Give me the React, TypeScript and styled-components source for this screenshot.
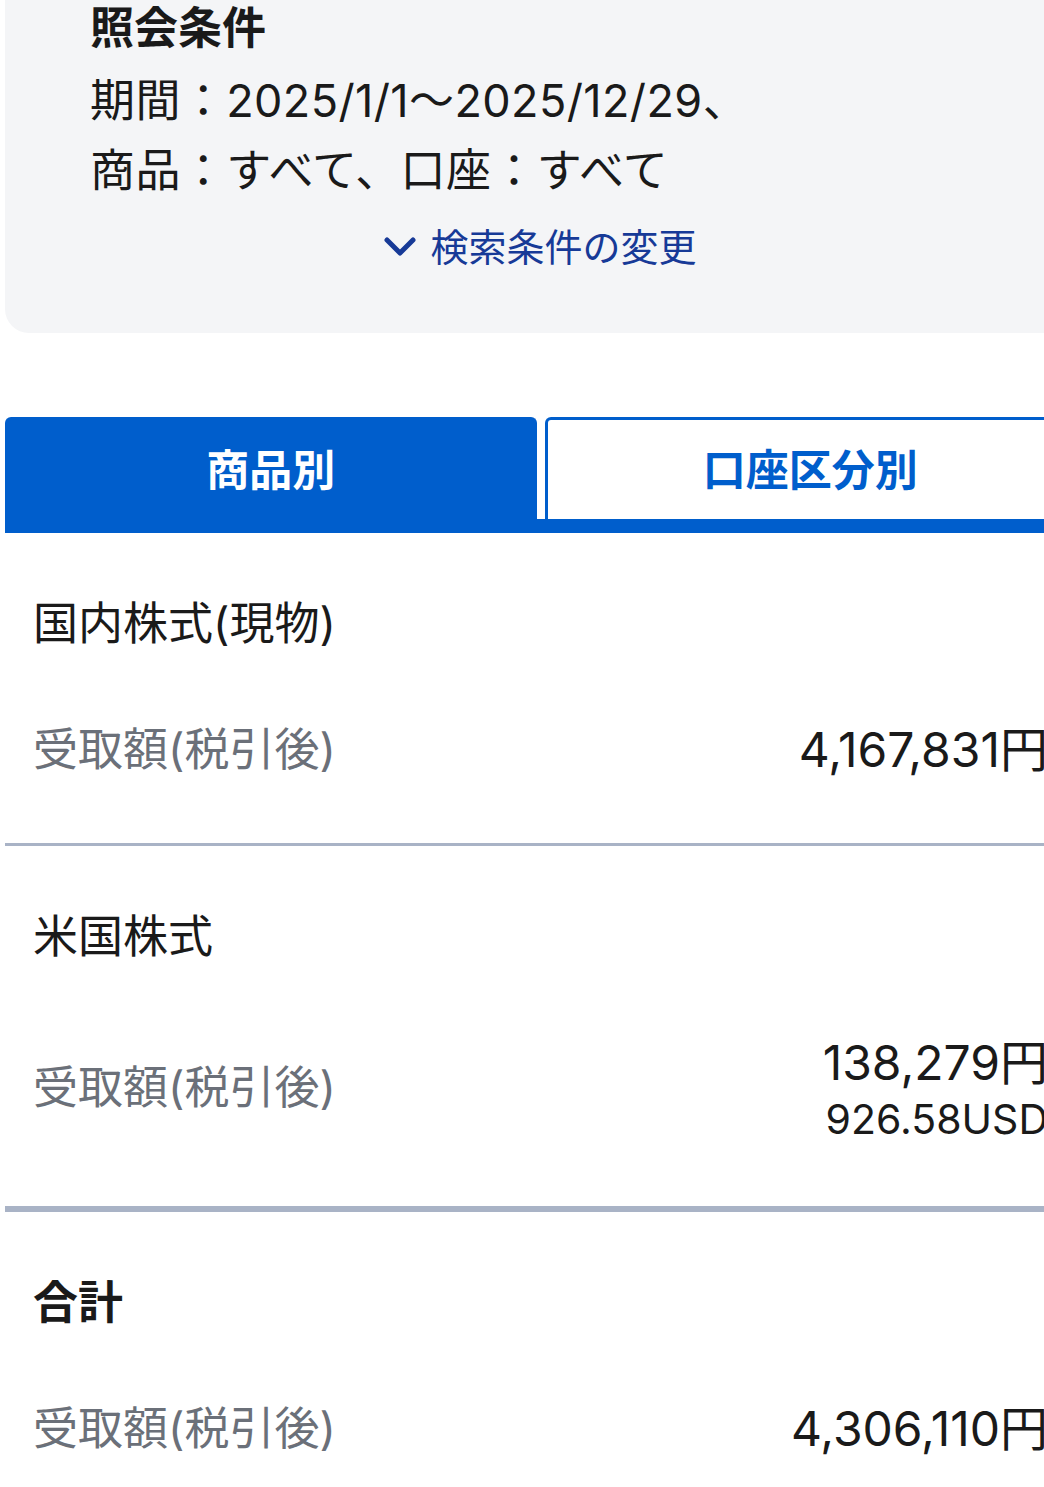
import React from 'react';
import styled, { createGlobalStyle } from 'styled-components';

const GlobalStyle = createGlobalStyle`
  html, body {
    margin: 0;
    padding: 0;
    background: #ffffff;
    overflow-x: hidden;
  }
  body {
    font-family: Inter, "Noto Sans CJK JP", "Noto Sans", sans-serif;
    color: #1a1a1a;
  }
`;

const Page = styled.div`
  width: 1071px;
  margin-left: 5px;
`;

// Search conditions panel
const Conditions = styled.section`
  background: #f4f5f7;
  border-radius: 0 0 24px 24px;
  padding: 0 28px 58px 85px;
`;

const ConditionsTitle = styled.h2`
  margin: 0 0 10px;
  font-size: 44px;
  font-weight: 700;
  line-height: 56px;
`;

const ConditionLine = styled.div`
  font-size: 45px;
  line-height: 70px;
  letter-spacing: 0.4px;
  color: #1a1a1a;
`;

const ChangeLink = styled.a`
  display: flex;
  align-items: center;
  justify-content: center;
  gap: 14px;
  margin: 13px 0 0 -57px;
  font-size: 38px;
  line-height: 56px;
  color: #173a97;
  text-decoration: none;
  cursor: pointer;
`;

// Tabs
const Tabs = styled.div`
  display: grid;
  grid-template-columns: 1fr 1fr;
  gap: 8px;
  margin-top: 84px;
  border-bottom: 14px solid #005ecc;
`;

const Tab = styled.button<{ active?: boolean }>`
  height: 102px;
  padding: 0 0 6px;
  border-radius: 6px 6px 0 0;
  border: 3px solid #005ecc;
  border-bottom: none;
  background: ${({ active }) => (active ? '#005ecc' : '#ffffff')};
  color: ${({ active }) => (active ? '#ffffff' : '#005ecc')};
  font-family: inherit;
  font-size: 43px;
  font-weight: 700;
  cursor: pointer;
`;

// Result sections
const Section = styled.section<{ thick?: boolean; last?: boolean }>`
  padding: 60px 28px 62px;
  border-bottom: ${({ thick, last }) =>
    last ? 'none' : `${thick ? 6 : 3}px solid #a9b3c6`};
  display: flex;
  flex-direction: column;
  gap: 64px;
`;

const SectionTitle = styled.h3<{ bold?: boolean }>`
  margin: 0;
  font-size: 45px;
  line-height: 62px;
  font-weight: ${({ bold }) => (bold ? 700 : 400)};
  color: #1a1a1a;
`;

const AmountRow = styled.div`
  display: flex;
  align-items: center;
  justify-content: space-between;
`;

const AmountLabel = styled.span`
  font-size: 45px;
  line-height: 62px;
  color: #6b7079;
`;

const AmountValues = styled.div`
  display: flex;
  flex-direction: column;
  align-items: flex-end;
`;

const Amount = styled.span`
  font-size: 48px;
  line-height: 62px;
  color: #1a1a1a;
`;

const SubAmount = styled.span`
  font-size: 41px;
  line-height: 50px;
  color: #1a1a1a;
`;

const Chevron = () => (
  <svg width="32" height="20" viewBox="0 0 32 20" fill="none">
    <path d="M3 3 L16 16 L29 3" stroke="#173a97" strokeWidth="5" strokeLinecap="round" strokeLinejoin="round" />
  </svg>
);

const sections = [
  { title: '国内株式(現物)', values: ['4,167,831円'] },
  { title: '米国株式', values: ['138,279円', '926.58USD'], thick: true },
  { title: '合計', values: ['4,306,110円'], bold: true, last: true },
];

export default function App() {
  return (
    <Page>
      <GlobalStyle />
      <Conditions>
        <ConditionsTitle>照会条件</ConditionsTitle>
        <ConditionLine>期間：2025/1/1～2025/12/29、</ConditionLine>
        <ConditionLine>商品：すべて、口座：すべて</ConditionLine>
        <ChangeLink>
          <Chevron />
          検索条件の変更
        </ChangeLink>
      </Conditions>

      <Tabs>
        <Tab active>商品別</Tab>
        <Tab>口座区分別</Tab>
      </Tabs>

      {sections.map((s) => (
        <Section key={s.title} thick={s.thick} last={s.last}>
          <SectionTitle bold={s.bold}>{s.title}</SectionTitle>
          <AmountRow>
            <AmountLabel>受取額(税引後)</AmountLabel>
            <AmountValues>
              <Amount>{s.values[0]}</Amount>
              {s.values[1] && <SubAmount>{s.values[1]}</SubAmount>}
            </AmountValues>
          </AmountRow>
        </Section>
      ))}
    </Page>
  );
}
